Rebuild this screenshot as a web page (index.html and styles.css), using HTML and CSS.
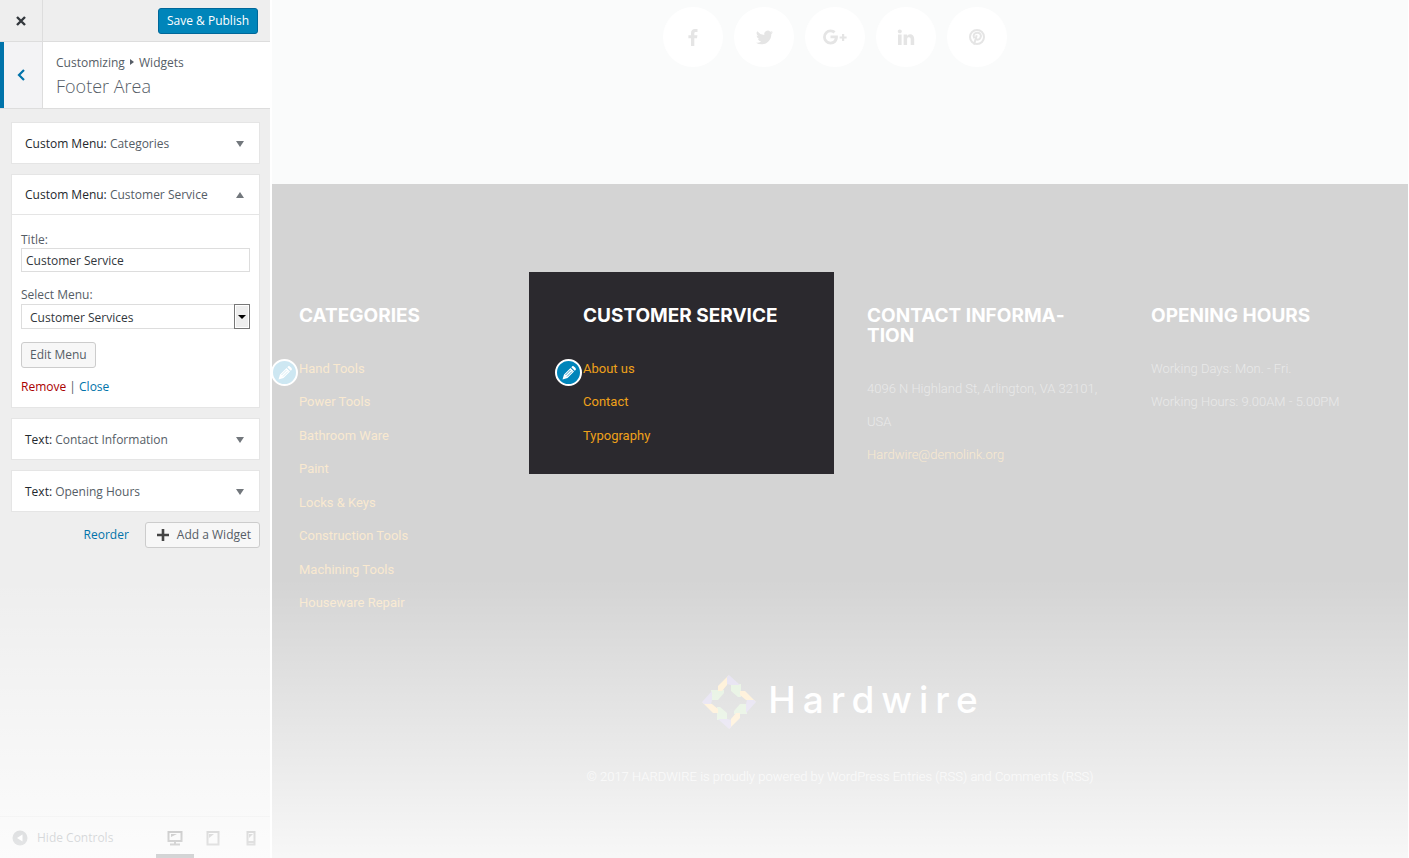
FILE: index.html
```html
<!DOCTYPE html>
<html lang="en">
<head>
<meta charset="utf-8">
<title>Customizing: Footer Area</title>
<link rel="stylesheet" href="styles.css">
</head>
<body>
<aside class="sidebar">
  <header class="topbar">
    <button class="close" aria-label="Close customizer"><svg width="12" height="12" viewBox="0 0 12 12"><path d="M2 2l8 8M10 2l-8 8" fill="none" stroke="#32373c" stroke-width="2.4"/></svg></button>
    <button class="save">Save &amp; Publish</button>
  </header>
  <div class="heading">
    <button class="back" aria-label="Back"><svg width="10" height="14" viewBox="0 0 10 14"><path d="M8 2L3 7l5 5" fill="none" stroke="#0073aa" stroke-width="2.2"/></svg></button>
    <div class="titles">
      <div class="crumbs">Customizing <svg width="6" height="6" viewBox="0 0 6 6"><path d="M1 0l4 3-4 3z" fill="#555d66"/></svg> Widgets</div>
      <h1 class="panel-title">Footer Area</h1>
    </div>
  </div>
  <div class="widgets">
    <section class="widget"><button class="widget-head"><span><b>Custom Menu:</b> Categories</span><i class="arrow"></i></button></section>
    <section class="widget">
      <button class="widget-head open"><span><b>Custom Menu:</b> Customer Service</span><i class="arrow up"></i></button>
      <form class="widget-body">
        <label class="label" for="title">Title:</label>
        <input class="field" id="title" type="text" value="Customer Service">
        <label class="label" for="menu">Select Menu:</label>
        <div class="select-wrap">
          <select class="field select" id="menu"><option>Customer Services</option></select>
          <span class="drop"></span>
        </div>
        <button class="btn" type="button">Edit Menu</button>
        <div class="links"><a class="remove" href="#">Remove</a> | <a class="link" href="#">Close</a></div>
      </form>
    </section>
    <section class="widget"><button class="widget-head"><span><b>Text:</b> Contact Information</span><i class="arrow"></i></button></section>
    <section class="widget"><button class="widget-head"><span><b>Text:</b> Opening Hours</span><i class="arrow"></i></button></section>
    <div class="actions">
      <a class="link" href="#">Reorder</a>
      <button class="btn add"><svg width="12" height="12" viewBox="0 0 12 12"><path d="M6 0v12M0 6h12" stroke="#444" stroke-width="2.6"/></svg>Add a Widget</button>
    </div>
  </div>
  <footer class="bottombar">
    <button class="hide"><svg width="16" height="16" viewBox="0 0 16 16"><circle cx="8" cy="8" r="7.5" fill="#82878c"/><path d="M10.500 4.500v7L5 8z" fill="#fff"/></svg>Hide Controls</button>
    <div class="devices">
      <button class="device active" aria-label="Desktop"><svg width="16" height="16" viewBox="0 0 16 16"><path d="M1.500 2h13v9h-13zM3 14.500h10M8 11v3" fill="none" stroke="#444" stroke-width="2"/><path d="M4 4h6L4 7z" fill="#444"/></svg></button>
      <button class="device" aria-label="Tablet"><svg width="16" height="16" viewBox="0 0 16 16"><path d="M2.500 2h11v12.500h-11z" fill="none" stroke="#777" stroke-width="2"/><path d="M4 4h5L4 8z" fill="#777"/></svg></button>
      <button class="device" aria-label="Mobile"><svg width="16" height="16" viewBox="0 0 16 16"><path d="M4.500 2h7v12.500h-7z" fill="none" stroke="#777" stroke-width="2"/><path d="M6 4h4L6 8zM5 11h6v2H5z" fill="#777"/></svg></button>
    </div>
  </footer>
</aside>
<main class="preview">
  <nav class="social">
    <a class="circle" href="#" aria-label="Facebook"><svg width="18" height="18" viewBox="0 0 18 18"><path d="M13.500 1v3h-1.700c-1.200 0-1.500.6-1.500 1.500v1.800h3.100l-.4 3h-2.700V18H7v-7.700H4.400v-3H7V5c0-2.700 1.600-4.100 4-4.100 1.100 0 2.100 0 2.500.1z"/></svg></a>
    <a class="circle" href="#" aria-label="Twitter"><svg width="17" height="17" viewBox="0 0 24 24"><path d="M24 4.600a10 10 0 0 1-2.800.8 5 5 0 0 0 2.100-2.700 10 10 0 0 1-3.100 1.200 4.900 4.900 0 0 0-8.400 4.500A14 14 0 0 1 1.700 3.100a4.900 4.900 0 0 0 1.500 6.600 5 5 0 0 1-2.200-.6c0 2.300 1.600 4.400 3.900 4.900a5 5 0 0 1-2.200.1 4.900 4.900 0 0 0 4.600 3.400A9.900 9.900 0 0 1 0 19.500a14 14 0 0 0 7.600 2.200c9.100 0 14.300-7.700 14-14.600A10 10 0 0 0 24 4.600z"/></svg></a>
    <a class="circle" href="#" aria-label="Google Plus"><svg width="26" height="18" viewBox="0 0 26 18"><path d="M8.500 7.600h7.300c.1.400.1.800.1 1.300 0 4.400-3 7.500-7.400 7.500A7.400 7.400 0 0 1 8.500 1.500c2 0 3.700.7 5 1.900l-2.100 2a4.200 4.200 0 0 0-2.900-1.100 4.700 4.700 0 0 0 0 9.400c2.900 0 4-2 4.200-3.400H8.500zM20 6h2.200v2.400h2.400v2.200h-2.400V13H20v-2.400h-2.400V8.400H20z"/></svg></a>
    <a class="circle" href="#" aria-label="LinkedIn"><svg width="18" height="18" viewBox="0 0 18 18"><path d="M1 6.600h3.600V17H1zM2.800 1.600c1.200 0 2 .8 2 1.800s-.8 1.800-2 1.800-2-.8-2-1.800.8-1.800 2-1.800zM6.600 6.600h3.500v1.500c.5-.8 1.400-1.800 3.100-1.800 2.300 0 4 1.500 4 4.800V17h-3.500v-5.500c0-1.400-.5-2.300-1.700-2.300-1 0-1.500.6-1.800 1.200-.1.300-.1.600-.1.900V17H6.600z"/></svg></a>
    <a class="circle" href="#" aria-label="Pinterest"><svg width="18" height="18" viewBox="0 0 18 18"><circle cx="9" cy="9" r="7" fill="none" stroke="#e5e5e5" stroke-width="2"/><path d="M6 16.500L8.700 7.200M6.300 10.200C4.500 7 6.500 4.800 9.300 4.800c3 0 4.300 2.300 3.200 4.800-1 2.400-3.600 2.500-4.400 1.200" fill="none" stroke="#e5e5e5" stroke-width="2"/></svg></a>
  </nav>
  <div class="site-footer">
    <div class="columns">
      <section class="column">
        <button class="edit faded" aria-label="Edit categories"><svg width="16" height="16" viewBox="0 0 16 16"><path d="M1.500 14.500l1.500-5 6.500-6.500 3.500 3.500L6.500 13zM10.300 2.200l1-1c1-.9 4.400 2.500 3.500 3.500l-1 1z" fill="#fff"/><path d="M4.500 10l5-5M6 11.500l5-5" stroke="#cde7f2" stroke-width=".8"/></svg></button>
        <h2 class="column-title">CATEGORIES</h2>
        <ul class="menu">
          <li><a href="#">Hand Tools</a></li><li><a href="#">Power Tools</a></li><li><a href="#">Bathroom Ware</a></li><li><a href="#">Paint</a></li><li><a href="#">Locks &amp; Keys</a></li><li><a href="#">Construction Tools</a></li><li><a href="#">Machining Tools</a></li><li><a href="#">Houseware Repair</a></li>
        </ul>
      </section>
      <section class="column highlight">
        <button class="edit" aria-label="Edit customer service"><svg width="16" height="16" viewBox="0 0 16 16"><path d="M1.500 14.500l1.500-5 6.500-6.500 3.500 3.500L6.500 13zM10.300 2.200l1-1c1-.9 4.400 2.500 3.500 3.500l-1 1z" fill="#fff"/><path d="M4.500 10l5-5M6 11.500l5-5" stroke="#0085ba" stroke-width=".8"/></svg></button>
        <h2 class="column-title">CUSTOMER SERVICE</h2>
        <ul class="menu"><li><a href="#">About us</a></li><li><a href="#">Contact</a></li><li><a href="#">Typography</a></li></ul>
      </section>
      <section class="column">
        <h2 class="column-title">CONTACT INFORMA&shy;TION</h2>
        <p class="text">4096 N Highland St, Arlington, VA 32101, USA<br><a href="#">Hardwire@demolink.org</a></p>
      </section>
      <section class="column">
        <h2 class="column-title">OPENING HOURS</h2>
        <p class="text">Working Days: Mon. - Fri.<br>Working Hours: 9.00AM - 5.00PM</p>
      </section>
    </div>
    <div class="brand">
      <svg width="54" height="54" viewBox="0 0 54 54"><defs><path id="corner" d="M29 9h10v13h-3l-7-6z" fill="#e0efda"/><g id="arm"><path d="M27 0L16 11v5h4l5-6z" fill="#ffeccb"/><path d="M27 0l11 10h-9l-4-1V2z" fill="#dfdaee"/></g></defs><use href="#corner"/><use href="#corner" transform="rotate(90 27 27)"/><use href="#corner" transform="rotate(180 27 27)"/><use href="#corner" transform="rotate(270 27 27)"/><use href="#arm"/><use href="#arm" transform="rotate(90 27 27)"/><use href="#arm" transform="rotate(180 27 27)"/><use href="#arm" transform="rotate(270 27 27)"/></svg>
      <span class="brand-name">Hardwire</span>
    </div>
    <p class="copyright">© 2017 HARDWIRE is proudly powered by WordPress Entries (RSS) and Comments (RSS)</p>
  </div>
</main>
<div class="fade"></div>
</body>
</html>
```
FILE: styles.css
```css
* { box-sizing: border-box; }
body { margin: 0; min-height: 100vh; display: flex; position: relative; background: #fff; font: 12px/18px "Open Sans", "Noto Sans", sans-serif; color: #555d66; }
button { font: inherit; color: inherit; cursor: pointer; margin: 0; }
a { text-decoration: none; }
.sidebar { width: 271px; flex: none; display: flex; flex-direction: column; background: #eee; border-right: 1px solid #fff; }
.topbar { display: flex; align-items: center; justify-content: space-between; height: 42px; border-bottom: 1px solid #ddd; padding-right: 12px; }
.close { width: 43px; align-self: stretch; border: 0; border-right: 1px solid #ddd; background: none; display: grid; place-items: center; }
.save { height: 26px; padding: 0 8px; border: 1px solid #006799; border-radius: 3px; background: #0085ba; color: #fff; }
.heading { display: flex; height: 67px; background: #fff; border-bottom: 1px solid #ddd; }
.back { width: 43px; border: 0; border-left: 4px solid #0073aa; border-right: 1px solid #ddd; background: #f3f3f5; padding: 0 4px 0 0; display: grid; place-items: center; }
.titles { padding: 12px 13px; }
.crumbs { line-height: 18px; }
.crumbs svg { margin: 0 1px 2px; }
.panel-title { margin: 2px 0 0; font-size: 18px; line-height: 24px; font-weight: 300; }
.widgets { flex: 1; padding: 13px 10px 13px 11px; display: flex; flex-direction: column; gap: 10px; }
.widget { background: #fff; border: 1px solid #e5e5e5; }
.widget-head { width: 100%; height: 40px; padding: 1px 15px 0 13px; border: 0; background: none; display: flex; align-items: center; justify-content: space-between; text-align: left; }
.widget-head.open { border-bottom: 1px solid #e5e5e5; }
.widget-head b { font-weight: 500; color: #23282d; }
.arrow { border: 4px solid transparent; border-top: 6px solid #72777c; border-bottom: 0; }
.arrow.up { border-top: 0; border-bottom: 6px solid #72777c; }
.widget-body { padding: 16px 9px 11px; display: flex; flex-direction: column; align-items: flex-start; }
.label { line-height: 17px; }
.field { width: 100%; height: 24px; padding: 0 4px; border: 1px solid #ddd; background: #fff; font: inherit; color: #32373c; }
.field + .label { margin-top: 14px; }
.select-wrap { position: relative; width: 100%; margin: 1px 0 13px; }
.select { appearance: none; height: 25px; padding: 2px 8px 0; border-radius: 0; display: block; }
.drop { position: absolute; top: 0; right: 0; width: 16px; height: 25px; border: 1px solid #777; background: #eee; box-shadow: inset 0 0 0 1px #fff; display: grid; place-items: center; pointer-events: none; }
.drop::after { content: ""; border: 4px solid transparent; border-top-color: #000; border-bottom: 0; }
.btn { height: 26px; padding: 0 8px; border: 1px solid #ccc; border-radius: 3px; background: #f7f7f7; }
.links { margin-top: 10px; }
.remove { color: #a00; }
.link { color: #0073aa; }
.actions { display: flex; justify-content: flex-end; align-items: center; gap: 16px; }
.add { display: flex; align-items: center; gap: 8px; padding-left: 11px; }
.bottombar { height: 42px; border-top: 1px solid #ddd; display: flex; justify-content: space-between; }
.hide { border: 0; background: none; padding: 0 12px; display: flex; align-items: center; gap: 9px; }
.devices { display: flex; }
.device { width: 38px; border: 0; background: none; padding: 0; display: grid; place-items: center; }
.device.active { border-bottom: 4px solid #191e23; padding-top: 4px; }
.preview { flex: 1; min-width: 0; margin: 0 1px; display: flex; flex-direction: column; background: #fafbfb; font-family: Roboto, sans-serif; font-size: 13px; }
.social { display: flex; justify-content: center; gap: 11px; padding: 7px 20px 117px 10px; }
.circle { width: 60px; height: 60px; border-radius: 50%; background: #fff; display: grid; place-items: center; }
.circle svg { fill: #e5e5e5; }
.site-footer { flex: 1; background: #d4d4d4; padding-top: 122px; }
.columns { display: grid; grid-template-columns: repeat(4, 1fr); }
.column { position: relative; padding: 0 16px 0 27px; }
.highlight { isolation: isolate; }
.highlight::before { content: ""; position: absolute; z-index: -1; inset: -34px 6px auto -27px; height: 202px; background: #2b292e; }
.column-title { margin: 0 0 26px; padding-right: 20px; font: 700 19px/20px Inter, sans-serif; color: #fff; }
.menu { list-style: none; margin: 0; padding: 0; line-height: 33px; }
.menu li:nth-child(even) { padding-bottom: 1px; }
.column a { color: #f9e9d0; }
.highlight .menu a { color: #efa11a; }
.text { margin: 0; line-height: 33px; font-weight: 300; color: #e9e9e9; }
.edit { position: absolute; left: -1px; top: 53px; width: 27px; height: 27px; padding: 0; border: 2px solid #fff; border-radius: 50%; background: #0085ba; display: grid; place-items: center; }
.edit.faded { background: #cde7f2; }
.brand { display: flex; justify-content: center; align-items: center; gap: 12px; margin-top: 55px; padding-left: 7px; }
.brand-name { font: 500 37px/50px Inter, sans-serif; letter-spacing: 7px; color: #fff; padding-bottom: 4px; }
.copyright { margin: 39px 0 0; text-align: center; font-weight: 300; color: #f4f4f4; }
.fade { position: absolute; inset: auto 0 0; height: 280px; pointer-events: none; background: linear-gradient(rgba(255,255,255,0), rgba(255,255,255,.82)); }
```
